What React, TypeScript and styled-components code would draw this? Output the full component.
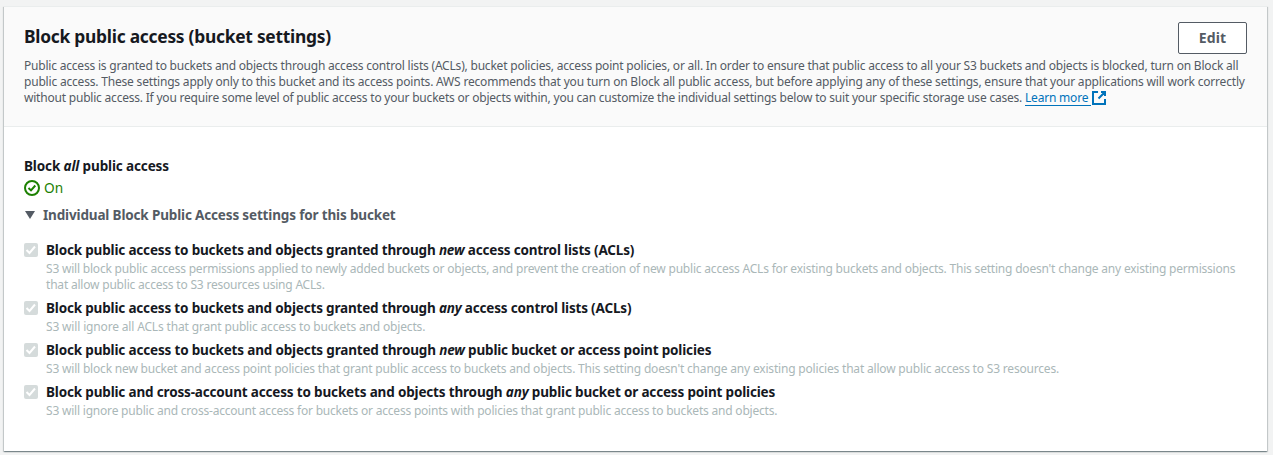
import React from "react";
import styled, { createGlobalStyle } from "styled-components";

const Global = createGlobalStyle`
  * { box-sizing: border-box; }
  body { margin: 0; background: #f2f3f3; font-family: "Noto Sans", sans-serif; color: #16191f; }
`;
const Page = styled.main`
  height: 455px;
  padding: 6px 6px 0 4px;
  overflow: hidden;
`;
const Panel = styled.section`
  height: 445px;
  background: #fff;
  border-top: 1px solid #eaeded;
  box-shadow: 0 1px 1px 0 rgba(0, 28, 36, 0.3), 1px 1px 1px 0 rgba(0, 28, 36, 0.15), -1px 1px 1px 0 rgba(0, 28, 36, 0.15);
`;
const Header = styled.header`
  height: 120px;
  padding: 15px 20px 0;
  background: #fafafa;
  border-bottom: 1px solid #eaeded;
`;
const TitleRow = styled.div`
  display: flex;
  justify-content: space-between;
  align-items: flex-start;
  height: 36px;
`;
const Title = styled.h2`
  margin: 3px 0 0;
  font-size: 17.4px;
  line-height: 22px;
  font-weight: 700;
  white-space: nowrap;
  letter-spacing: -0.26px;
`;
const EditButton = styled.button`
  width: 69px;
  height: 32px;
  padding: 0;
  background: #fff;
  border: 1px solid #545b64;
  border-radius: 2px;
  color: #545b64;
  font: 700 14px/20px "Noto Sans", sans-serif;
  letter-spacing: 0.1px;
`;
const Line = styled.div<{ $track?: number }>`
  font-size: 12px;
  line-height: 16px;
  height: 16px;
  white-space: nowrap;
  letter-spacing: ${(p) => p.$track ?? 0}px;
`;
const Intro = styled.div`
  color: #545b64;
`;
const Link = styled.a`
  display: inline-block;
  height: 16px;
  line-height: 16px;
  padding-right: 3px;
  color: #0073bb;
  border-bottom: 1px solid #0073bb;
  vertical-align: top;
`;
const ExternalIcon = styled.svg`
  width: 14px;
  height: 14px;
  margin: 1px 0 0 1px;
  vertical-align: top;
`;
const Body = styled.div`
  padding: 28px 20px 0;
`;
const Label = styled.div<{ $track?: number }>`
  font-size: 13.5px;
  line-height: 22px;
  height: 22px;
  font-weight: 700;
  white-space: nowrap;
  letter-spacing: ${(p) => p.$track ?? -0.155}px;
`;
const Status = styled.div`
  display: flex;
  align-items: center;
  gap: 4px;
  height: 22px;
  color: #1d8102;
  font-size: 13.7px;
  line-height: 22px;
`;
const Toggle = styled.div`
  display: flex;
  align-items: center;
  gap: 8px;
  height: 22px;
  margin-top: 5px;
  padding-left: 1px;
  color: #545b64;
`;
const Settings = styled.div`
  display: flex;
  flex-direction: column;
  gap: 4px;
  margin-top: 13px;
`;
const Setting = styled.div`
  display: grid;
  grid-template-columns: 14px 1fr;
  column-gap: 8px;
`;
const Check = styled.span`
  display: flex;
  width: 14px;
  height: 14px;
  margin-top: 4px;
  background: #d5dbdb;
  border-radius: 2px;
`;
const Description = styled.div`
  color: #aab7b8;
`;

type Row = { before: string; em: string; after: string; track: number; lines: [string, number][] };
const rows: Row[] = [
  {
    before: "Block public access to buckets and objects granted through ", em: "new", after: " access control lists (ACLs)", track: -0.173,
    lines: [
      ["S3 will block public access permissions applied to newly added buckets or objects, and prevent the creation of new public access ACLs for existing buckets and objects. This setting doesn't change any existing permissions", -0.203],
      ["that allow public access to S3 resources using ACLs.", -0.2],
    ],
  },
  {
    before: "Block public access to buckets and objects granted through ", em: "any", after: " access control lists (ACLs)", track: -0.173,
    lines: [["S3 will ignore all ACLs that grant public access to buckets and objects.", -0.16]],
  },
  {
    before: "Block public access to buckets and objects granted through ", em: "new", after: " public bucket or access point policies", track: -0.168,
    lines: [["S3 will block new bucket and access point policies that grant public access to buckets and objects. This setting doesn't change any existing policies that allow public access to S3 resources.", -0.187]],
  },
  {
    before: "Block public and cross-account access to buckets and objects through ", em: "any", after: " public bucket or access point policies", track: -0.166,
    lines: [["S3 will ignore public and cross-account access for buckets or access points with policies that grant public access to buckets and objects.", -0.204]],
  },
];

export default function App() {
  return (
    <Page>
      <Global />
      <Panel>
        <Header>
          <TitleRow>
            <Title>Block public access (bucket settings)</Title>
            <EditButton>Edit</EditButton>
          </TitleRow>
          <Intro>
            <Line $track={-0.203}>Public access is granted to buckets and objects through access control lists (ACLs), bucket policies, access point policies, or all. In order to ensure that public access to all your S3 buckets and objects is blocked, turn on Block all</Line>
            <Line $track={-0.19}>public access. These settings apply only to this bucket and its access points. AWS recommends that you turn on Block all public access, but before applying any of these settings, ensure that your applications will work correctly</Line>
            <Line $track={-0.207}>
              without public access. If you require some level of public access to your buckets or objects within, you can customize the individual settings below to suit your specific storage use cases. <Link>Learn more</Link>
              <ExternalIcon viewBox="1 1 14 14" fill="none" stroke="#0073bb" strokeWidth="2">
                <path d="M10 2h4v4M7.500 8.500L14 2M14 9.050V14H2V2h5.040" />
              </ExternalIcon>
            </Line>
          </Intro>
        </Header>
        <Body>
          <Label $track={-0.13}>Block <em>all</em> public access</Label>
          <Status>
            <svg width="16" height="16" viewBox="0 0 16 16" fill="none" stroke="#1d8102" strokeWidth="2">
              <circle cx="8" cy="8" r="7" />
              <path d="M4.500 8L7 10.400L11.300 5.500" />
            </svg>
            On
          </Status>
          <Toggle>
            <svg width="10" height="8" viewBox="0 0 10 8"><path d="M0 0H10L5 8Z" fill="#545b64" /></svg>
            <Label>Individual Block Public Access settings for this bucket</Label>
          </Toggle>
          <Settings>
            {rows.map((row, i) => (
              <Setting key={i}>
                <Check>
                  <svg width="14" height="14" viewBox="0 0 14 14" fill="none" stroke="#fff" strokeWidth="2">
                    <path d="M2.500 7L5.500 10L11 3.500" />
                  </svg>
                </Check>
                <div>
                  <Label $track={row.track}>{row.before}<em>{row.em}</em>{row.after}</Label>
                  <Description>
                    {row.lines.map(([text, track]) => <Line key={text} $track={track}>{text}</Line>)}
                  </Description>
                </div>
              </Setting>
            ))}
          </Settings>
        </Body>
      </Panel>
    </Page>
  );
}
